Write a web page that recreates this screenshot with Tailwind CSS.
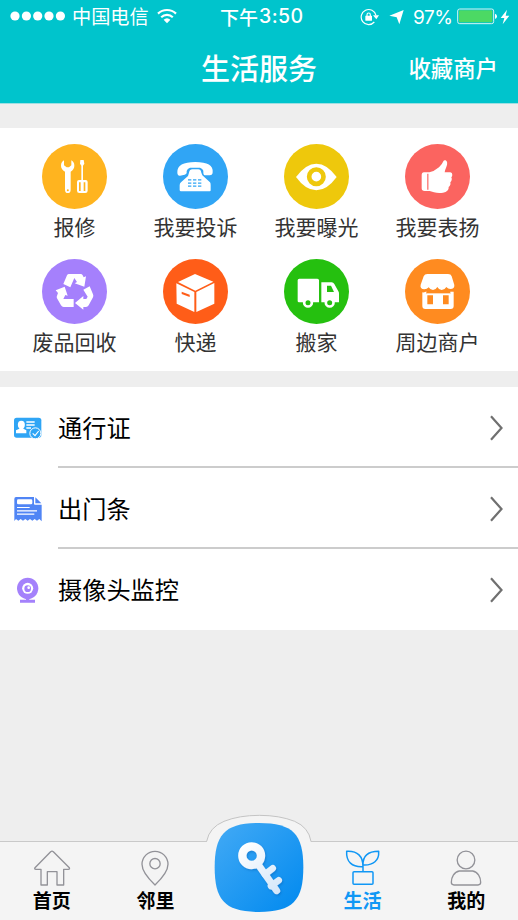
<!DOCTYPE html>
<html lang="zh-CN">
<head>
<meta charset="utf-8">
<title>生活服务</title>
<script src="https://cdn.jsdelivr.net/npm/@tailwindcss/browser@4"></script>
</head>
<body class="w-[518px] h-[920px] overflow-hidden flex flex-col bg-[#eeeeee] font-['Noto_Sans_CJK_SC',sans-serif]">

<header class="h-[104px] shrink-0 bg-[#00c4cc] text-white border-b border-[#9fdfe2]">
  <div class="h-[33px] flex items-center text-[19px] leading-none whitespace-nowrap">
    <div class="w-[220px] pl-[10px] flex items-center">
      <svg class="w-[56px] h-[12px]" viewBox="0 0 56 12" fill="#fff"><circle cx="5" cy="6" r="4.6"/><circle cx="16.4" cy="6" r="4.6"/><circle cx="27.7" cy="6" r="4.6"/><circle cx="39" cy="6" r="4.6"/><circle cx="50.4" cy="6" r="4.6"/></svg>
      <span class="ml-[6px] font-normal text-[19.2px]">中国电信</span>
      <svg class="ml-[8px] w-[20px] h-[16px]" viewBox="0 0 20 16" fill="none" stroke="#fff" stroke-width="2.2"><path d="M1 5.6a13 13 0 0 1 18 0M4.2 9.2a8.6 8.6 0 0 1 11.6 0"/><path d="M6.6 11.8a5 5 0 0 1 6.8 0L10 15.2z" fill="#fff" stroke="none"/></svg>
    </div>
    <div class="w-[140px] flex items-center"><span class="font-medium">下午</span><span class="ml-[1px] mt-px font-['Inter'] font-medium text-[19.5px] tracking-[0.4px]">3:50</span></div>
    <div class="flex items-center">
      <svg class="w-[19px] h-[18px]" viewBox="0 0 57 54" fill="none" stroke="#fff" stroke-width="3.500"><path d="M43 42A22.500 22.500 0 1 1 48 22"/><path d="M39 22h18l-8 12z" fill="#fff" stroke="none"/><path d="M21 25v-5a5 5 0 0 1 10 0v5"/><rect x="16" y="23" width="20" height="15" rx="1" fill="#fff" stroke="none"/></svg>
      <svg class="ml-[10px] w-[15px] h-[16px]" viewBox="0 0 45 48" fill="#fff"><path d="M44 3 31 46 23 25 1 20z"/></svg>
      <span class="ml-[9px] mt-px w-[44px] font-['Inter'] font-normal text-[19px] tracking-[-0.4px]">97%</span>
      <svg class="w-[41px] h-[17px]" viewBox="0 0 123 51"><rect x="2" y="3" width="108" height="44" rx="6" fill="none" stroke="#d7f4f3" stroke-width="3"/><rect x="6" y="7" width="100" height="36" rx="3" fill="#4cd964"/><path d="M114 17q6 2 6 8t-6 8z" fill="#fff"/></svg>
      <svg class="ml-[2px] w-[10px] h-[16px]" viewBox="0 0 30 48" fill="#fff"><path d="M21 2 2 27h11L8 46 28 20H17z"/></svg>
    </div>
  </div>
  <div class="h-[68px] grid grid-cols-[1fr_118px_1fr] items-center">
    <span></span>
    <h1 class="text-[29px] leading-none font-medium text-center whitespace-nowrap">生活服务</h1>
    <span class="text-[22.4px] leading-none font-medium text-right pr-[20px]">收藏商户</span>
  </div>
</header>

<section class="mt-[24px] h-[243px] shrink-0 bg-white pt-[16px] pl-[14px] pr-[20px] grid grid-cols-4 auto-rows-[115px] text-[#333] text-[21px] leading-[30px] whitespace-nowrap">
  <div class="flex flex-col items-center">
    <svg class="w-[65px] h-[65px] shrink-0" viewBox="66 42 195 195"><circle cx="163.500" cy="139.500" r="97.500" fill="#ffb41f"/><path d="M132 91q-9 5-9 16 0 11 12 18v54q0 10 8.500 10t8.500-10v-54q11-7 11-18 0-11-9-16v15l-7 6h-7l-8-6z" fill="#fff"/><circle cx="143.500" cy="181" r="3" fill="#ffb41f"/><path d="M181 90h10l2 11-4 6v43h8q6 0 6 6v26q0 7-7 7h-18q-7 0-7-7v-26q0-6 6-6h7v-43l-4-6z" fill="#fff"/><path d="M177 157h5v26h-5zM191 157h5v26h-5z" fill="#ffb41f"/></svg>
    <span class="mt-[2px]">报修</span>
  </div>
  <div class="flex flex-col items-center">
    <svg class="w-[65px] h-[65px] shrink-0" viewBox="428 42 195 195"><circle cx="525.500" cy="139.500" r="97.500" fill="#30a5f5"/><path d="M471 127q-1-31 54-31t52 31q0 9-9 9h-12q-7 0-7-8v-6q-2-6-10-9h-30q-8 3-10 10v6q-1 4-6 5l-14 3q-8 1-8-10z" fill="#fff"/><path d="M506 128q2-10 10-10h18q7 0 9 10l3 8 23 21q2 2 2 8v16q0 3-3 3h-86q-4 0-4-4v-14q0-6 4-9l21-19z" fill="#fff"/><path d="M503 149.500h40M503 159.500h40M503 168.500h40" stroke="#30a5f5" stroke-width="4" stroke-dasharray="10 5"/></svg>
    <span class="mt-[2px]">我要投诉</span>
  </div>
  <div class="flex flex-col items-center">
    <svg class="w-[65px] h-[65px] shrink-0" viewBox="72 42 195 195"><circle cx="169.500" cy="139.500" r="97.500" fill="#eec80c"/><path d="M108 141q29-40 61-40t61 40q-29 40-61 40t-61-40z" fill="#fff"/><circle cx="169" cy="140" r="21.500" fill="none" stroke="#eec80c" stroke-width="14"/></svg>
    <span class="mt-[2px]">我要曝光</span>
  </div>
  <div class="flex flex-col items-center">
    <svg class="w-[65px] h-[65px] shrink-0" viewBox="434 42 195 195"><circle cx="531.500" cy="139.500" r="97.500" fill="#fb6460"/><path d="M491 127h16q15-3 29-15 9-8 13-18 2-5 7-3 8 5 2 20-4 9-5 16h17q6 1 6 8-1 5-3 7 3 5 0 11l-3 4q2 6-2 11l-3 3q1 7-4 11-4 5-13 6-14 2-27-1l-13-4h-15q-9 0-9-8v-39q0-9 7-9z" fill="#fff"/><path d="M502.500 131v48" stroke="#fb6460" stroke-width="3.500"/></svg>
    <span class="mt-[2px]">我要表扬</span>
  </div>
  <div class="flex flex-col items-center">
    <svg class="w-[65px] h-[65px] shrink-0" viewBox="66 27 195 195"><circle cx="163.500" cy="124.500" r="97.500" fill="#a580fc"/><g fill="#fff"><path d="M147 72H182Q186 72 188 76L191 82 198 79 193 110 164 100 171 96 163 84 151 112 130 102 141 76Q143 72 147 72z"/><path d="M107 121 134 110 143 137 136 135 130 147H161V171H131Q126 171 123 166L111 145Q109 141 111 137L114 129z"/><path d="M190 119 209 109 219 133Q221 138 219 142L206 166Q203 171 198 171H190V179L165 159 190 138V147H199L203 140z"/></g></svg>
    <span class="mt-[2px]">废品回收</span>
  </div>
  <div class="flex flex-col items-center">
    <svg class="w-[65px] h-[65px] shrink-0" viewBox="428 27 195 195"><circle cx="525.500" cy="124.500" r="97.500" fill="#ff5d18"/><path d="M524 72l55 23-54 27-52-26zM468 100l54 26v60l-53-25zM582 99v62l-54 25v-60z" fill="#fff"/><path d="M484 125l24 9v7l-24-9z" fill="#ff5d18"/></svg>
    <span class="mt-[2px]">快递</span>
  </div>
  <div class="flex flex-col items-center">
    <svg class="w-[65px] h-[65px] shrink-0" viewBox="72 27 195 195"><circle cx="169.500" cy="124.500" r="97.500" fill="#25c00f"/><path d="M118 86h54q5 0 5 5v66h-60q-4 0-4-4V91q0-5 5-5zM184 97h31q5 0 8 5l12 22q2 3 2 7v26h-53z" fill="#fff"/><path d="M201 107h12l9 19h-21z" fill="#25c00f"/><circle cx="144" cy="158" r="11.500" fill="#25c00f" stroke="#fff" stroke-width="8"/><circle cx="209" cy="158" r="11.500" fill="#25c00f" stroke="#fff" stroke-width="8"/></svg>
    <span class="mt-[2px]">搬家</span>
  </div>
  <div class="flex flex-col items-center">
    <svg class="w-[65px] h-[65px] shrink-0" viewBox="434 27 195 195"><circle cx="531.500" cy="124.500" r="97.500" fill="#ff8b20"/><path d="M486 127q7 1 14-3l80 1v43q0 9-9 9h-76q-9 0-9-9z" fill="#fff"/><path d="M498 120h72v12h-72z" fill="#ff8b20"/><path d="M498 130h72v7h-72z" fill="#fff"/><path d="M501 136h17v27h-17zM548 136h17v27h-17z" fill="#ff8b20"/><path d="M501 72h62q9 0 11 7l8 26q1 12-12 12-7 0-12-6-5 9-14 9-8 0-13-9-5 9-13 9t-13-8q-5 6-13 6-14-1-11-14l9-25q3-7 11-7z" fill="#fff"/></svg>
    <span class="mt-[2px]">周边商户</span>
  </div>
</section>

<section class="mt-[16px] h-[243px] shrink-0 bg-white text-black text-[24.2px] leading-none">
  <div class="flex h-[81px]">
    <div class="w-[58px] pl-[13px] flex items-center"><svg class="w-[29px] h-[26px]" viewBox="39 103 87 78"><rect x="42" y="111" width="82" height="60" rx="8" fill="#2fa5f5"/><g fill="#fff"><ellipse cx="64" cy="132" rx="10.500" ry="12"/><path d="M58 138h12v6l9 5v9H48v-9l10-5z"/><path d="M79 122h25v4H79zM79 131h25v4H79zM79 140h14v4H79z"/></g><circle cx="106" cy="158" r="16.500" fill="#2fa5f5" stroke="#fff" stroke-width="3"/><path d="M98 158l7 7 11-14" fill="none" stroke="#fff" stroke-width="3.500"/></svg></div>
    <div class="grow flex items-center justify-between border-b-[2px] border-[#cccccc] pr-[15px] pt-[2px]"><span>通行证</span><svg class="w-[14px] h-[26px]" viewBox="0 0 14 26" fill="none" stroke="#707070" stroke-width="2.200"><path d="M2 1.200 12.500 13 2 24.800"/></svg></div>
  </div>
  <div class="flex h-[81px]">
    <div class="w-[58px] pl-[13px] flex items-center"><svg class="w-[29px] h-[26px]" viewBox="39 348 87 78"><path d="M47 351h55v20q0 3 3 3h20v50l-7-7-7 5-7-5-7 5-7-5-7 5-7-5-7 5-7-5-7 5-7-5-5 6V357q0-6 5-6zM106 352l18 18h-18z" fill="#5085f5"/><rect x="51" y="358" width="46" height="15" rx="4" fill="#fff"/><path d="M51 382.500h38M51 392.500h60M51 402.500h52" stroke="#fff" stroke-width="3.500"/></svg></div>
    <div class="grow flex items-center justify-between border-b-[2px] border-[#cccccc] pr-[15px] pt-[2px]"><span>出门条</span><svg class="w-[14px] h-[26px]" viewBox="0 0 14 26" fill="none" stroke="#707070" stroke-width="2.200"><path d="M2 1.200 12.500 13 2 24.800"/></svg></div>
  </div>
  <div class="flex h-[81px]">
    <div class="w-[58px] pl-[13px] flex items-center"><svg class="w-[29px] h-[26px]" viewBox="39 139 87 78" fill="#a481fb"><circle cx="83" cy="173" r="32"/><path d="M78 200h10v7h17v9H60v-9h18z"/><circle cx="83" cy="173" r="16.500" fill="#fff"/><circle cx="83" cy="174" r="10"/><circle cx="86" cy="171" r="4" fill="#fff"/></svg></div>
    <div class="grow flex items-center justify-between pr-[15px]"><span>摄像头监控</span><svg class="w-[14px] h-[26px]" viewBox="0 0 14 26" fill="none" stroke="#707070" stroke-width="2.200"><path d="M2 1.200 12.500 13 2 24.800"/></svg></div>
  </div>
</section>

<nav class="mt-auto h-[79px] shrink-0 bg-[#f4f4f4] border-t border-[#c9c9c9] grid grid-cols-5 text-black text-[19px] leading-none font-bold">
  <div class="flex flex-col items-center pt-[7px]">
    <svg class="w-[38px] h-[38px]" viewBox="98 118 114 114" fill="none" stroke="#929298" stroke-width="4" stroke-linejoin="round"><path d="M151 126q4-3 8 0l48 48q2 5-3 5h-14v47h-20v-40h-29v40h-19v-47h-15q-6 0-3-5z"/></svg>
    <span class="mt-[3px]">首页</span>
  </div>
  <div class="flex flex-col items-center pt-[7px]">
    <svg class="w-[38px] h-[38px]" viewBox="409 118 114 114" fill="none" stroke="#929298" stroke-width="4"><path d="M466 226q-39-37-39-62a39 39 0 0 1 78 0q0 25-39 62z" stroke-linejoin="round"/><circle cx="466" cy="162" r="15.500"/></svg>
    <span class="mt-[3px]">邻里</span>
  </div>
  <div class="relative">
    <svg class="absolute left-[-17.200px] -top-[37px] w-[140px] h-[115px]" viewBox="0 0 420 345">
      <defs>
        <linearGradient id="tile" x1="0" y1="0" x2="1" y2="1"><stop offset="0" stop-color="#43aaf5"/><stop offset="1" stop-color="#0089ef"/></linearGradient>
        <linearGradient id="key" gradientUnits="userSpaceOnUse" x1="160" y1="120" x2="270" y2="260"><stop offset="0" stop-color="#fff"/><stop offset="1" stop-color="#d3e6fa"/></linearGradient>
        <filter id="shade" x="-20%" y="-20%" width="140%" height="140%"><feDropShadow dx="3" dy="4" stdDeviation="3" flood-color="#0059a8" flood-opacity=".4"/></filter>
      </defs>
      <path d="M50 113Q58 67 102 49 147 31 208 31T314 49Q356 67 363 113V345H50z" fill="#f4f4f4"/>
      <path d="M50 109Q58 67 102 49 147 31 208 31T314 49Q356 67 363 109" fill="none" stroke="#c4c4c4" stroke-width="3"/>
      <path d="M207 54C309 54 340 88 340 187S309 321 207 321 74 286 74 187 105 54 207 54z" fill="url(#tile)"/>
      <g filter="url(#shade)" fill="none" stroke="url(#key)" stroke-linecap="round"><circle cx="185" cy="152" r="28" stroke-width="25"/><path d="M206 181 260 257" stroke-width="21"/><path d="M225 208 248 190M243 243 266 226" stroke-width="20"/></g>
    </svg>
  </div>
  <div class="flex flex-col items-center pt-[7px] text-[#1097f5]">
    <svg class="w-[38px] h-[38px]" viewBox="71 58 114 114" fill="none" stroke="currentColor" stroke-width="4.500" stroke-linejoin="round"><path d="M128 126v-15C95 113 77 96 79 65c33-2 49 15 49 46M128 106c-1-26 14-41 47-41 2 27-16 43-47 41"/><rect x="98" y="126" width="60" height="38" rx="3"/></svg>
    <span class="mt-[3px]">生活</span>
  </div>
  <div class="flex flex-col items-center pt-[7px]">
    <svg class="w-[38px] h-[38px]" viewBox="383 58 114 114" fill="none" stroke="#929298" stroke-width="4"><circle cx="440" cy="91" r="26.500"/><path d="M420 124h40c16 3 24 19 24 34q0 8-8 8h-72q-8 0-8-8c0-15 8-31 24-34z"/></svg>
    <span class="mt-[3px]">我的</span>
  </div>
</nav>
</body>
</html>
